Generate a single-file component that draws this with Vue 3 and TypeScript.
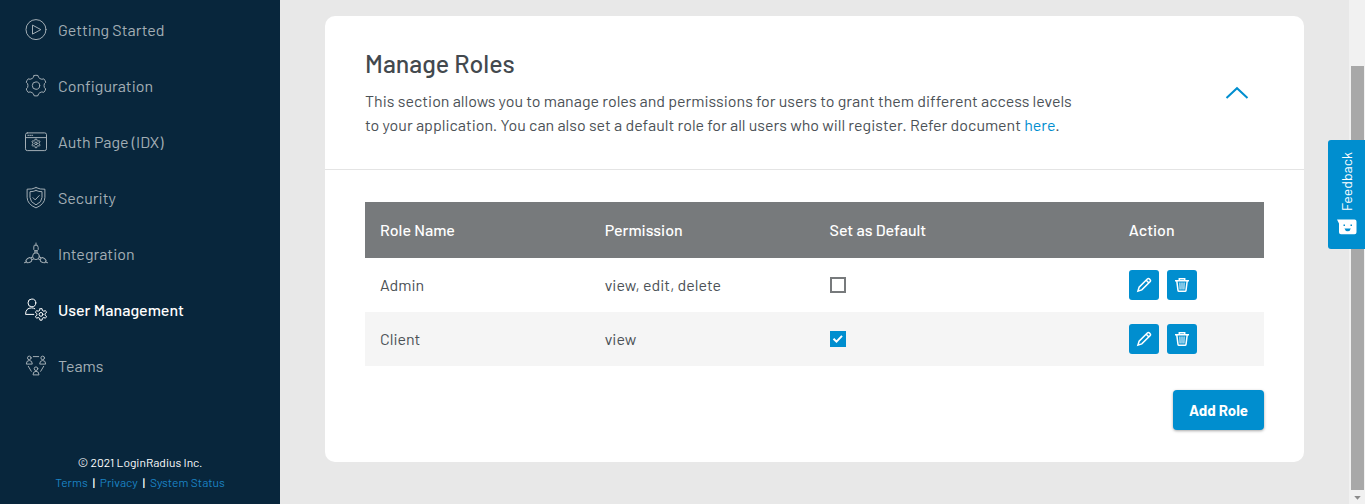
<script setup lang="ts">
import { ref } from 'vue'

type IconName = 'play' | 'gear' | 'page' | 'shield' | 'nodes' | 'user' | 'team'

interface NavItem {
  label: string
  icon: IconName
  active?: boolean
}

interface Role {
  name: string
  permissions: string[]
  isDefault: boolean
}

const navItems: NavItem[] = [
  { label: 'Getting Started', icon: 'play' },
  { label: 'Configuration', icon: 'gear' },
  { label: 'Auth Page (IDX)', icon: 'page' },
  { label: 'Security', icon: 'shield' },
  { label: 'Integration', icon: 'nodes' },
  { label: 'User Management', icon: 'user', active: true },
  { label: 'Teams', icon: 'team' },
]

const footerLinks = ['Terms', 'Privacy', 'System Status']

const roles = ref<Role[]>([
  { name: 'Admin', permissions: ['view', 'edit', 'delete'], isDefault: false },
  { name: 'Client', permissions: ['view'], isDefault: true },
])

const expanded = ref(true)

// Outline of a six-toothed gear with its first tooth pointing up.
function gearPath(cx: number, cy: number, outer: number, inner: number): string {
  const point = (radius: number, degrees: number): string => {
    const a = ((degrees - 90) * Math.PI) / 180
    return `${(cx + radius * Math.cos(a)).toFixed(2)} ${(cy + radius * Math.sin(a)).toFixed(2)}`
  }
  let d = ''
  for (let i = 0; i < 6; i++) {
    const a = i * 60
    d += `${i === 0 ? 'M' : 'L'}${point(outer, a - 11)}`
    d += `Q${point(outer * 1.03, a)} ${point(outer, a + 11)}`
    d += `L${point(inner * 1.08, a + 17)}`
    d += `Q${point(inner * 0.96, a + 30)} ${point(inner * 1.08, a + 43)}`
  }
  return `${d}Z`
}

const largeGear = gearPath(12, 11.6, 10.3, 8)
const pageGear = gearPath(12, 13.4, 4.3, 2.9)
const userGear = gearPath(17, 16.4, 5.8, 4)
</script>

<template>
  <div class="page">
    <aside class="sidebar">
      <nav class="nav">
        <a
          v-for="item in navItems"
          :key="item.label"
          href="#"
          class="nav-item"
          :class="{ active: item.active }"
        >
          <svg class="nav-icon" viewBox="0 0 24 24" aria-hidden="true">
            <g v-if="item.icon === 'play'">
              <circle cx="12" cy="11.6" r="10" />
              <path d="M8.5 7.5v8.6l8-4.3z" />
            </g>
            <g v-else-if="item.icon === 'gear'">
              <path :d="largeGear" />
              <circle cx="12" cy="11.6" r="3.7" />
            </g>
            <g v-else-if="item.icon === 'page'">
              <rect x="1.5" y="2.9" width="21" height="17.7" rx="1.8" />
              <path d="M1.5 7.6h21M3.8 5.3h.9M5.8 5.3h.9M7.8 5.3h.9" />
              <path :d="pageGear" />
              <circle cx="12" cy="13.4" r="1.3" />
            </g>
            <g v-else-if="item.icon === 'shield'">
              <path d="M12 1.600q4.200 2 8.900 1.600v8.100q0 6.800-8.900 10.600q-8.900-3.800-8.900-10.600V3.200q4.700.4 8.900-1.600z" />
              <path d="M12 4.500q3 1.300 6 1.200v5.700q0 4.700-6 7.500q-6-2.800-6-7.500V5.700q3 .1 6-1.200z" />
              <path d="M9 11.700l2.200 2.200l4-4.300" />
            </g>
            <g v-else-if="item.icon === 'nodes'">
              <circle cx="12" cy="14.200" r="3.400" />
              <g v-for="turn in [0, 120, 240]" :key="turn" :transform="`rotate(${turn} 12 14.2)`">
                <path d="M12 1v2.200M10.900 10.700V8.800h2.200v1.900M10.700 3.200h2.600l.9 2.200v2.200l-1.100 1.200h-2.200L9.800 7.600V5.400z" />
              </g>
            </g>
            <g v-else-if="item.icon === 'user'">
              <circle cx="7.900" cy="4.900" r="3.900" />
              <path d="M9.800 16.400H1.600q0-6.500 6-6.500q2 0 3.200.8" />
              <path :d="userGear" />
              <circle cx="17" cy="16.400" r="1.900" />
            </g>
            <g v-else>
              <g v-for="spot in ['0 0', '13.4 0', '6.700 10.800']" :key="spot" :transform="`translate(${spot})`">
                <circle cx="5.300" cy="3.900" r="1.800" />
                <path d="M2.300 9.700q0-3.200 3-3.200t3 3.200z" />
              </g>
              <path d="M9.300 2.600h5.400M4.300 12.300l3 5M19.700 12.300l-3 5" />
            </g>
          </svg>
          <span>{{ item.label }}</span>
        </a>
      </nav>
      <footer class="legal">
        <div>© 2021 LoginRadius Inc.</div>
        <div class="legal-links">
          <a v-for="link in footerLinks" :key="link" href="#">{{ link }}</a>
        </div>
      </footer>
    </aside>

    <main class="content">
      <section class="card">
        <header class="card-head">
          <div>
            <h1>Manage Roles</h1>
            <p>
              This section allows you to manage roles and permissions for users to grant them different access levels<br />
              to your application. You can also set a default role for all users who will register. Refer document
              <a href="#">here</a>.
            </p>
          </div>
          <button class="collapse" type="button" aria-label="Toggle section" :aria-expanded="expanded" @click="expanded = !expanded">
            <svg viewBox="0 0 24 14" width="24" height="14" aria-hidden="true">
              <path d="M1.500 12L12 2.200L22.500 12" />
            </svg>
          </button>
        </header>

        <div v-if="expanded" class="card-body">
          <table>
            <thead>
              <tr>
                <th scope="col">Role Name</th>
                <th scope="col">Permission</th>
                <th scope="col" class="wide">Set as Default</th>
                <th scope="col" class="narrow">Action</th>
              </tr>
            </thead>
            <tbody>
              <tr v-for="role in roles" :key="role.name">
                <td>{{ role.name }}</td>
                <td>{{ role.permissions.join(', ') }}</td>
                <td>
                  <label class="check">
                    <input v-model="role.isDefault" type="checkbox" :aria-label="`Set ${role.name} as default`" />
                    <svg viewBox="0 0 16 16" aria-hidden="true"><path d="M3.500 7.700l3 2.900l5.500-5.700" /></svg>
                  </label>
                </td>
                <td>
                  <div class="actions">
                    <button type="button" :aria-label="`Edit ${role.name}`">
                      <svg viewBox="0 0 16 16" aria-hidden="true">
                        <path d="M1.900 14.100l1.200-3.900L11.300 2q1-.9 2-.1l.8.800q.9 1-.1 2L5.800 12.900zM10.200 3.300l2.500 2.500" />
                      </svg>
                    </button>
                    <button type="button" :aria-label="`Delete ${role.name}`">
                      <svg viewBox="0 0 16 16" aria-hidden="true">
                        <path d="M1 3.700h14M5.300 3.400V1.800h5.400v1.600M2.800 4l1.200 9.400q.1.900 1 .9h6q.9 0 1-.9L13.200 4" />
                        <path class="bars" d="M5.900 5.500l.2 7M8 5.500v7M10.100 5.500l-.2 7" />
                      </svg>
                    </button>
                  </div>
                </td>
              </tr>
            </tbody>
          </table>
          <button class="add" type="button">Add Role</button>
        </div>
      </section>
    </main>

    <div class="scroll-track" aria-hidden="true">
      <div class="scroll-thumb"></div>
      <svg viewBox="0 0 14 14"><path d="M3.500 6h7l-3.500 4z" /></svg>
    </div>

    <button class="feedback" type="button">
      <span>Feedback</span>
      <svg viewBox="0 0 20 16" aria-hidden="true">
        <path class="bubble" d="M0 .5h17.500q2 0 2 2v10.700q0 2-2 2H4q-2 0-2-2V4.500z" />
        <path class="face" d="M6.500 5.500h1.500v1.500H6.500zM13.500 5.500H15v1.500h-1.500zM7.500 9.500h6.300q-.6 2.700-3.100 2.700t-3.200-2.700z" />
      </svg>
    </button>
  </div>
</template>

<style>
body {
  margin: 0;
  background: #e8e8e8;
}
</style>

<style scoped>
.page {
  display: flex;
  min-height: 100vh;
  font-family: Barlow, Roboto, "Liberation Sans", sans-serif;
  font-size: 16px;
  line-height: 24px;
  color: #4b5156;
  background: #e8e8e8;
}

.page * {
  box-sizing: border-box;
}

a {
  color: #008ecf;
  text-decoration: none;
}

button {
  padding: 0;
  border: 0;
  font-family: inherit;
  color: #fff;
  background: #008ecf;
  cursor: pointer;
}

svg {
  fill: none;
  stroke: currentColor;
}

.sidebar {
  flex: 0 0 280px;
  display: flex;
  flex-direction: column;
  justify-content: space-between;
  padding: 2px 0 12px;
  background: #08263c;
}

.nav-item {
  display: flex;
  align-items: center;
  gap: 10px;
  height: 56px;
  padding-left: 24px;
  color: #a3aeb5;
}

.nav-item.active {
  font-weight: 500;
  color: #fff;
}

.nav-icon {
  width: 24px;
  height: 24px;
  stroke-linejoin: round;
  stroke-linecap: round;
}

.legal {
  font-size: 12px;
  line-height: 20px;
  text-align: center;
  color: #fff;
}

.legal-links {
  display: flex;
  justify-content: center;
}

.legal-links a {
  color: #1b83c4;
}

.legal-links a + a::before {
  content: "|";
  padding: 0 5px;
  font-weight: 500;
  color: #fff;
}

.content {
  flex: 1;
  min-width: 0;
  padding: 16px 45px 42px;
}

.card {
  border-radius: 10px;
  background: #fff;
}

.card-head {
  display: flex;
  align-items: center;
  justify-content: space-between;
  padding: 32px 55px 32px 40px;
  border-bottom: 1px solid #e4e4e4;
}

h1 {
  margin: 0 0 11px;
  font-size: 25px;
  line-height: 30px;
  font-weight: 500;
  color: #43494e;
}

p {
  margin: 0;
}

.collapse {
  display: flex;
  color: #008ecf;
  background: transparent;
}

.collapse svg {
  stroke-width: 2;
}

.card-body {
  display: flex;
  flex-direction: column;
  gap: 24px;
  padding: 32px 40px;
}

table {
  width: 100%;
  table-layout: fixed;
  border-collapse: collapse;
}

th,
td {
  width: 25%;
  padding: 0 15px;
  text-align: left;
}

th {
  height: 56px;
  font-weight: 500;
  color: #fff;
  background: #777a7c;
}

th.wide {
  width: 33.3%;
}

th.narrow {
  width: 16.7%;
}

td {
  height: 54px;
}

tbody tr:nth-child(even) {
  background: #f5f5f5;
}

.check {
  display: grid;
  width: 16px;
  height: 16px;
}

.check input,
.check svg {
  grid-area: 1 / 1;
  width: 16px;
  height: 16px;
  margin: 0;
}

.check input {
  appearance: none;
  border: 2px solid #777a7c;
  background: #fff;
}

.check input:checked {
  border-color: #008ecf;
  background: #008ecf;
}

.check svg {
  display: none;
  color: #fff;
  stroke-width: 2;
  pointer-events: none;
}

.check input:checked + svg {
  display: block;
}

.actions {
  display: flex;
  gap: 8px;
}

.actions button {
  display: grid;
  place-items: center;
  width: 30px;
  height: 30px;
  border-radius: 3px;
}

.actions svg {
  width: 16px;
  height: 16px;
  stroke-width: 1.5;
}

.actions .bars {
  stroke-width: 1;
}

.add {
  align-self: flex-end;
  height: 40px;
  padding: 0 16px;
  border-radius: 4px;
  font-size: 15px;
  font-weight: 700;
  box-shadow: 0 1px 3px rgba(0, 0, 0, 0.35);
}

.scroll-track {
  flex: 0 0 16px;
  display: flex;
  flex-direction: column;
  padding: 66px 1px 0 2px;
  background: #f1f1f1;
}

.scroll-thumb {
  flex: 1;
  background: #a8a8a8;
}

.scroll-track svg {
  width: 13px;
  height: 14px;
  fill: #8b8b8b;
  stroke: none;
}

.feedback {
  position: fixed;
  top: 140px;
  right: 0;
  display: flex;
  flex-direction: column;
  align-items: center;
  justify-content: space-between;
  width: 37px;
  height: 109px;
  padding: 12px 0 14px;
  border-radius: 3px 0 0 3px;
  font-size: 14px;
  line-height: 16px;
}

.feedback span {
  writing-mode: vertical-rl;
  transform: rotate(180deg);
}

.feedback svg {
  width: 20px;
  height: 16px;
  stroke: none;
}

.bubble {
  fill: #fff;
}

.face {
  fill: #008ecf;
}
</style>
